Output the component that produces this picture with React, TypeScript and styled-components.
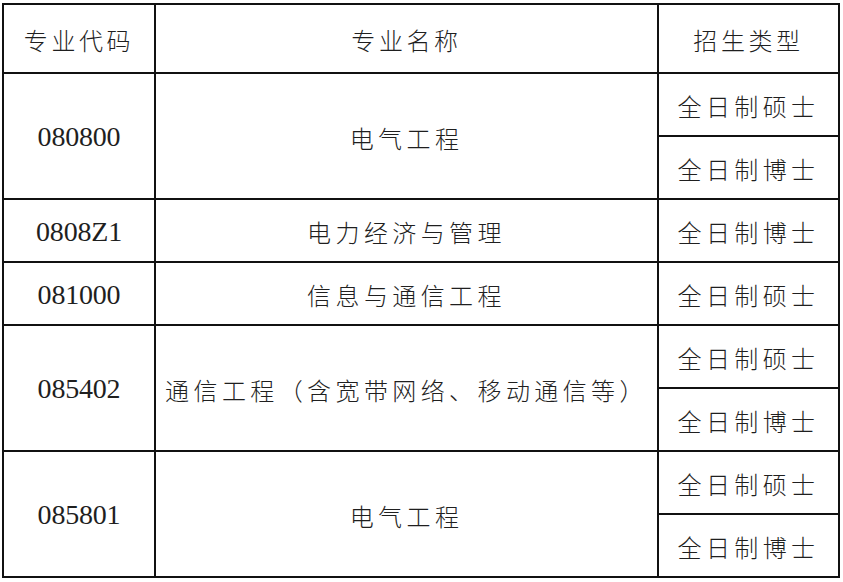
import React from 'react';
import styled, { createGlobalStyle } from 'styled-components';

type Row = {
  code: string;
  name: string;
  types: string[];
};

const rows: Row[] = [
  { code: '080800', name: '电气工程', types: ['全日制硕士', '全日制博士'] },
  { code: '0808Z1', name: '电力经济与管理', types: ['全日制博士'] },
  { code: '081000', name: '信息与通信工程', types: ['全日制硕士'] },
  {
    code: '085402',
    name: '通信工程（含宽带网络、移动通信等）',
    types: ['全日制硕士', '全日制博士'],
  },
  { code: '085801', name: '电气工程', types: ['全日制硕士', '全日制博士'] },
];

const App = (): React.ReactElement => (
  <>
    <GlobalStyle />
    <Page>
      <Table>
        <colgroup>
          <col style={{ width: 152 }} />
          <col style={{ width: 503 }} />
          <col style={{ width: 181 }} />
        </colgroup>
        <thead>
          <tr>
            <HeadCell>专业代码</HeadCell>
            <HeadCell>专业名称</HeadCell>
            <HeadCell>招生类型</HeadCell>
          </tr>
        </thead>
        <tbody>
          {rows.map((row) =>
            row.types.map((type, i) => (
              <tr key={row.code + type}>
                {i === 0 && (
                  <>
                    <CodeCell rowSpan={row.types.length}>{row.code}</CodeCell>
                    <TextCell rowSpan={row.types.length}>{row.name}</TextCell>
                  </>
                )}
                <TextCell>{type}</TextCell>
              </tr>
            )),
          )}
        </tbody>
      </Table>
    </Page>
  </>
);

const GlobalStyle = createGlobalStyle`
  html, body {
    margin: 0;
    padding: 0;
    background: #fff;
  }
`;

const Page = styled.div`
  padding: 3px 0 0 2px;
`;

const Table = styled.table`
  border-collapse: collapse;
  table-layout: fixed;
  width: 836px;
  color: #1f1f1f;
  font-family: 'Liberation Serif', 'Noto Sans CJK SC', serif;

  tr {
    height: 63px;
  }

  thead tr {
    height: 69px;
  }
`;

const Cell = styled.td`
  border: 2px solid #111;
  padding: 2px 0 0;
  text-align: center;
  vertical-align: middle;
  white-space: nowrap;
`;

const TextCell = styled(Cell)`
  font-family: 'Noto Sans CJK SC', sans-serif;
  font-weight: 300;
  font-size: 24px;
  letter-spacing: 4.4px;
`;

const HeadCell = styled(TextCell).attrs({ as: 'th' })`
  letter-spacing: 3.6px;
`;

const CodeCell = styled(Cell)`
  font-size: 28px;
  letter-spacing: -0.2px;
`;

export default App;
